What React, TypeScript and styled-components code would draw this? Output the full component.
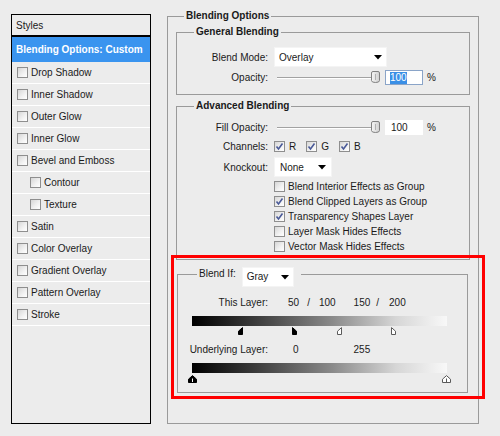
import React from "react";
import styled, { createGlobalStyle } from "styled-components";

const Global = createGlobalStyle`
  html, body { margin: 0; padding: 0; background: #ececec; }
  body { font-family: "Liberation Sans", Arial, sans-serif; font-size: 10px; color: #1a1a1a; }
  * { box-sizing: border-box; }
`;

const Page = styled.div`
  position: relative;
  width: 500px;
  height: 436px;
  display: flex;
  align-items: flex-start;
  padding: 10px 0 0 11px;
  background: #ececec;
`;

/* ---------- left styles list ---------- */
const StylesPanel = styled.div`
  margin-top: 4px;
  width: 140px;
  height: 410px;
  border: 1px solid #000;
  display: flex;
  flex-direction: column;
`;

const PanelHeader = styled.div`
  height: 22px;
  padding-left: 4px;
  display: flex;
  align-items: center;
  border-bottom: 2px solid #000;
`;

const ActiveItem = styled.div`
  height: 25px;
  padding-left: 4px;
  display: flex;
  align-items: center;
  background: #3a94ef;
  color: #fff;
  font-weight: bold;
`;

const StyleItem = styled.div<{ $indent?: boolean }>`
  height: 22px;
  border-bottom: 1px solid #fff;
  display: flex;
  align-items: center;
  gap: 3px;
  padding-left: ${(p) => (p.$indent ? 18 : 5)}px;
`;

const Box = styled.span`
  width: 11px;
  height: 11px;
  flex: none;
  border: 1px solid #8e8e8e;
  background: linear-gradient(135deg, #d6d6d6 0%, #f2f2f2 60%, #ffffff 100%);
  display: inline-flex;
  align-items: center;
  justify-content: center;
`;

const CheckBox = ({ checked }: { checked?: boolean }) => (
  <Box>
    {checked && (
      <svg width="9" height="9" viewBox="0 0 9 9">
        <path d="M1.5 4.5 L3.5 7 L7.5 1.5" fill="none" stroke="#4a5a98" strokeWidth="1.6" />
      </svg>
    )}
  </Box>
);

/* ---------- right groups ---------- */
const Group = styled.fieldset`
  margin: 0 0 0 16px;
  width: 312px;
  height: 414px;
  min-width: 0;
  border: 1px solid #9a9a9a;
  padding: 4px 8px 0 8px;
`;

const Legend = styled.legend<{ $offset: number }>`
  font-weight: bold;
  line-height: 12px;
  height: 12px;
  padding: 0 2px;
  margin-left: ${(p) => p.$offset}px;
`;

const SubGroup = styled.fieldset<{ $top: number; $pt: number; $pb: number; $ml?: number; $mr?: number }>`
  margin: ${(p) => p.$top}px ${(p) => p.$mr ?? 0}px 0 ${(p) => p.$ml ?? 0}px;
  min-width: 0;
  border: 1px solid #9a9a9a;
  padding: ${(p) => p.$pt}px 8px ${(p) => p.$pb}px 8px;
`;

const Row = styled.div<{ $h: number; $mt?: number }>`
  display: flex;
  align-items: center;
  height: ${(p) => p.$h}px;
  margin-top: ${(p) => p.$mt ?? 0}px;
`;

const Label = styled.span<{ $w?: number }>`
  width: ${(p) => p.$w ?? 83}px;
  flex: none;
  text-align: right;
  margin-right: 6px;
  white-space: nowrap;
`;

const SelectBox = styled.div<{ $w: number; $pl: number; $pr: number }>`
  width: ${(p) => p.$w}px;
  height: 20px;
  flex: none;
  background: #fff;
  border: 1px solid #f4f4f4;
  display: flex;
  align-items: center;
  justify-content: space-between;
  padding: 0 ${(p) => p.$pr}px 0 ${(p) => p.$pl}px;
`;

const Select = ({ value, w, pl = 4, pr = 4 }: { value: string; w: number; pl?: number; pr?: number }) => (
  <SelectBox $w={w} $pl={pl} $pr={pr}>
    <span>{value}</span>
    <svg width="8" height="5" viewBox="0 0 8 5">
      <path d="M0 0 H8 L4 4.5 Z" fill="#000" />
    </svg>
  </SelectBox>
);

const SliderWrap = styled.div`
  position: relative;
  width: 104px;
  height: 15px;
  margin-left: 3px;
  display: flex;
  align-items: center;
  flex: none;
`;

const Track = styled.div`
  width: 98px;
  height: 2px;
  border-top: 1px solid #a2a2a2;
  border-bottom: 1px solid #ffffff;
`;

const ThumbHolder = styled.div`
  position: absolute;
  right: 1px;
  top: 1px;
  width: 9px;
  height: 12px;
  display: flex;
`;

const Slider = () => (
  <SliderWrap>
    <Track />
    <ThumbHolder>
      <svg width="9" height="12" viewBox="0 0 9 12">
        <defs>
          <linearGradient id="tg" x1="0" y1="0" x2="1" y2="0">
            <stop offset="0" stopColor="#f6f6f6" />
            <stop offset="1" stopColor="#cfcfcf" />
          </linearGradient>
        </defs>
        <path
          d="M2 0.5 H7 Q8.5 0.5 8.5 2 V9.5 Q8.5 11.5 4.5 11.5 Q0.5 11.5 0.5 9.5 V2 Q0.5 0.5 2 0.5 Z"
          fill="url(#tg)"
          stroke="#808080"
        />
        <path d="M4.5 3 V9" stroke="#b0b0b0" />
      </svg>
    </ThumbHolder>
  </SliderWrap>
);

const NumInput = styled.div<{ $focused?: boolean }>`
  width: 38px;
  height: 15px;
  margin-left: 4px;
  flex: none;
  background: #fff;
  border: 1px solid ${(p) => (p.$focused ? "#8aa4c8" : "#ffffff")};
  padding-left: ${(p) => (p.$focused ? 4 : 5)}px;
  display: flex;
  align-items: center;
`;

const Selected = styled.span`
  background: #3a8fe6;
  color: #fff;
  line-height: 12px;
`;

const Unit = styled.span`
  margin-left: 4px;
`;

const ChannelItem = styled.span`
  display: inline-flex;
  align-items: center;
  gap: 4px;
  margin-right: 10px;
`;

const OptionRow = styled.div`
  height: 15px;
  display: flex;
  align-items: center;
  gap: 3px;
  margin-left: 89px;
`;

const BlendLegend = styled.legend`
  padding: 0 7px 0 2px;
  margin-left: 11px;
  height: 14px;
`;

const LegendInner = styled.div`
  display: flex;
  align-items: flex-start;
  height: 14px;
  gap: 6px;
  line-height: 14px;
`;

const Value = styled.span<{ $ml: number }>`
  margin-left: ${(p) => p.$ml}px;
  white-space: nowrap;
`;

const BarBlock = styled.div<{ $mt: number }>`
  margin: ${(p) => p.$mt}px 0 0 6px;
  width: 255px;
`;

const Bar = styled.div`
  height: 10px;
  background: linear-gradient(to right, #000 0%, #3c3c3c 25%, #8a8a8a 55%, #d6d6d6 80%, #f8f8f8 100%);
`;

const ThumbRow = styled.div<{ $h: number }>`
  position: relative;
  height: ${(p) => p.$h}px;
`;

const Thumb = styled.div<{ $top: number }>`
  position: absolute;
  top: ${(p) => p.$top}px;
  display: flex;
`;

type Kind = "halfL" | "halfR" | "full";
const BlendThumb = ({ value, kind, dark, top }: { value: number; kind: Kind; dark: boolean; top: number }) => {
  const x = Math.round((value / 255) * 254);
  const fill = dark ? "#000" : "#fff";
  const stroke = dark ? "#000" : "#5a5a5a";
  if (kind === "full") {
    return (
      <Thumb $top={top} style={{ left: x - 4 }}>
        <svg width="9" height="8" viewBox="0 0 9 8">
          <path d="M0.5 7.5 V4.2 L4.5 0.6 L8.5 4.2 V7.5 Z" fill={fill} stroke={stroke} />
          <path d="M4.5 3.5 V7" stroke={dark ? "#fff" : "#5a5a5a"} />
        </svg>
      </Thumb>
    );
  }
  const d = kind === "halfL" ? "M4.5 0.6 V7.5 H0.5 V4.2 Z" : "M0.5 0.6 L4.5 4.2 V7.5 H0.5 Z";
  return (
    <Thumb $top={top} style={{ left: kind === "halfL" ? x - 4 : x }}>
      <svg width="5" height="8" viewBox="0 0 5 8">
        <path d={d} fill={fill} stroke={stroke} />
      </svg>
    </Thumb>
  );
};

const Annotation = styled.div`
  position: absolute;
  left: 171px;
  top: 255px;
  width: 314px;
  height: 144px;
  border: 3px solid #ff0000;
  pointer-events: none;
`;

const styleItems: { name: string; indent?: boolean }[] = [
  { name: "Drop Shadow" },
  { name: "Inner Shadow" },
  { name: "Outer Glow" },
  { name: "Inner Glow" },
  { name: "Bevel and Emboss" },
  { name: "Contour", indent: true },
  { name: "Texture", indent: true },
  { name: "Satin" },
  { name: "Color Overlay" },
  { name: "Gradient Overlay" },
  { name: "Pattern Overlay" },
  { name: "Stroke" },
];

const advancedOptions: { name: string; checked: boolean }[] = [
  { name: "Blend Interior Effects as Group", checked: false },
  { name: "Blend Clipped Layers as Group", checked: true },
  { name: "Transparency Shapes Layer", checked: true },
  { name: "Layer Mask Hides Effects", checked: false },
  { name: "Vector Mask Hides Effects", checked: false },
];

export default function App() {
  return (
    <>
      <Global />
      <Page>
        <StylesPanel>
          <PanelHeader>Styles</PanelHeader>
          <ActiveItem>Blending Options: Custom</ActiveItem>
          {styleItems.map((s) => (
            <StyleItem key={s.name} $indent={s.indent}>
              <CheckBox />
              <span>{s.name}</span>
            </StyleItem>
          ))}
        </StylesPanel>

        <Group>
          <Legend $offset={8}>Blending Options</Legend>

          <SubGroup $top={0} $pt={9} $pb={9}>
            <Legend $offset={9}>General Blending</Legend>
            <Row $h={20}>
              <Label>Blend Mode:</Label>
              <Select value="Overlay" w={113} pl={4} pr={4} />
            </Row>
            <Row $h={15} $mt={3}>
              <Label>Opacity:</Label>
              <Slider />
              <NumInput $focused>
                <Selected>100</Selected>
              </NumInput>
              <Unit>%</Unit>
            </Row>
          </SubGroup>

          <SubGroup $top={5} $pt={8} $pb={5}>
            <Legend $offset={9}>Advanced Blending</Legend>
            <Row $h={15}>
              <Label>Fill Opacity:</Label>
              <Slider />
              <NumInput>100</NumInput>
              <Unit>%</Unit>
            </Row>
            <Row $h={12} $mt={5}>
              <Label>Channels:</Label>
              <ChannelItem>
                <CheckBox checked />R
              </ChannelItem>
              <ChannelItem>
                <CheckBox checked />G
              </ChannelItem>
              <ChannelItem>
                <CheckBox checked />B
              </ChannelItem>
            </Row>
            <Row $h={20} $mt={5}>
              <Label>Knockout:</Label>
              <Select value="None" w={58} pl={5} pr={5} />
            </Row>
            <div style={{ marginTop: 2 }}>
              {advancedOptions.map((o) => (
                <OptionRow key={o.name}>
                  <CheckBox checked={o.checked} />
                  <span>{o.name}</span>
                </OptionRow>
              ))}
            </div>
          </SubGroup>

          <SubGroup $top={7} $pt={14} $pb={9} $ml={1} $mr={2}>
            <BlendLegend>
              <LegendInner>
                <span>Blend If:</span>
                <Select value="Gray" w={52} pl={4} pr={4} />
              </LegendInner>
            </BlendLegend>
            <Row $h={14}>
              <Label $w={82}>This Layer:</Label>
              <Value $ml={14}>50</Value>
              <Value $ml={8}>/</Value>
              <Value $ml={9}>100</Value>
              <Value $ml={18}>150</Value>
              <Value $ml={6}>/</Value>
              <Value $ml={10}>200</Value>
            </Row>
            <BarBlock $mt={7}>
              <Bar />
              <ThumbRow $h={9}>
                <BlendThumb value={50} kind="halfL" dark top={1} />
                <BlendThumb value={100} kind="halfR" dark top={1} />
                <BlendThumb value={150} kind="halfL" dark={false} top={1} />
                <BlendThumb value={200} kind="halfR" dark={false} top={1} />
              </ThumbRow>
            </BarBlock>
            <Row $h={14} $mt={7}>
              <Label $w={82}>Underlying Layer:</Label>
              <Value $ml={19}>0</Value>
              <Value $ml={55}>255</Value>
            </Row>
            <BarBlock $mt={7}>
              <Bar />
              <ThumbRow $h={10}>
                <BlendThumb value={0} kind="full" dark top={2} />
                <BlendThumb value={255} kind="full" dark={false} top={2} />
              </ThumbRow>
            </BarBlock>
          </SubGroup>
        </Group>

        <Annotation />
      </Page>
    </>
  );
}
